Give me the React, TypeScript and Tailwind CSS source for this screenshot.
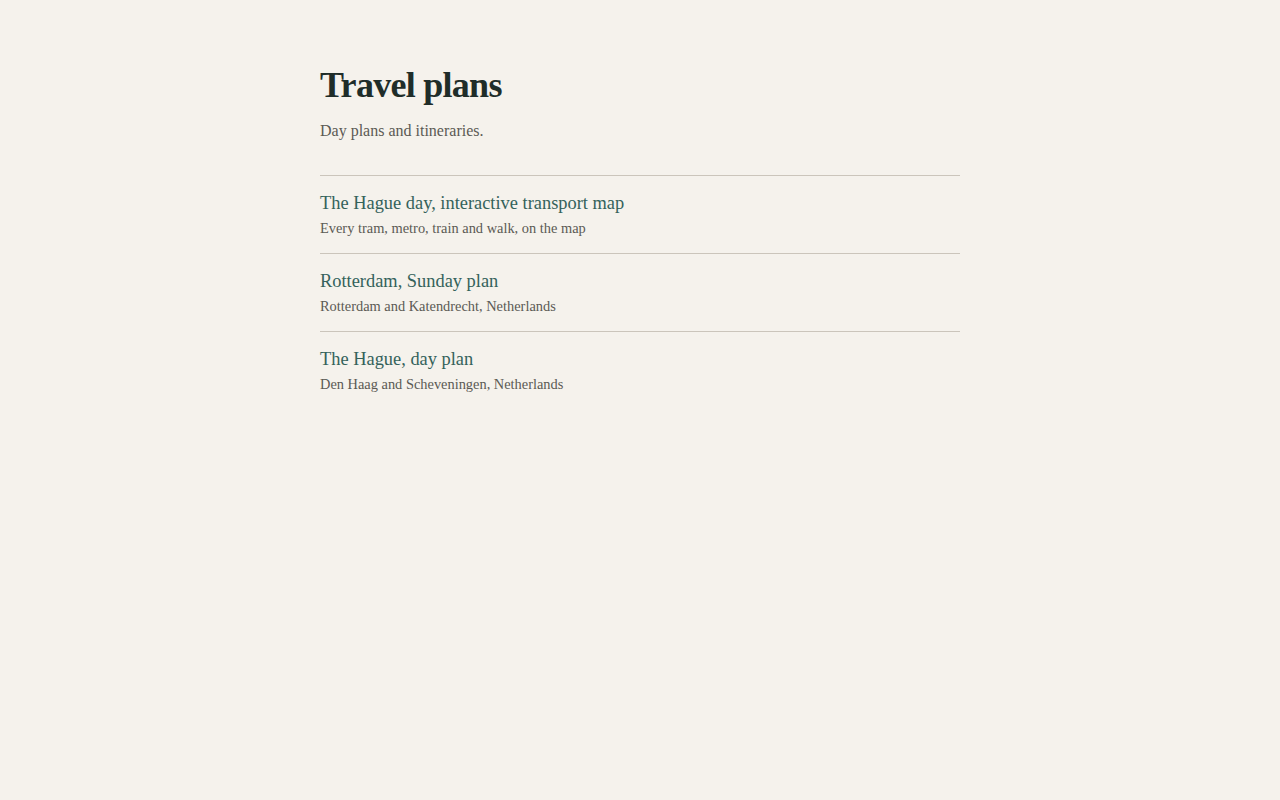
import React from 'react';

const plans = [
  { title: 'The Hague day, interactive transport map', sub: 'Every tram, metro, train and walk, on the map' },
  { title: 'Rotterdam, Sunday plan', sub: 'Rotterdam and Katendrecht, Netherlands' },
  { title: 'The Hague, day plan', sub: 'Den Haag and Scheveningen, Netherlands' },
];

export default function App() {
  return (
    <div className="min-h-screen bg-[#f5f2ec] font-['Liberation_Serif',serif]">
      <main className="mx-auto w-[640px] pt-16">
        <h1 className="text-[36px] font-bold leading-[1.2] tracking-[-0.02em] text-[#1f2d29]">Travel plans</h1>
        <p className="mt-3 text-base text-[#5b5a54]">Day plans and itineraries.</p>
        <ul className="mt-8">
          {plans.map((p) => (
            <li key={p.title} className="border-t border-[#cbc5bb] pt-[15px] pb-[15px]">
              <a href="#" className="block text-[18.4px] leading-[1.4] text-[#34625b]">{p.title}</a>
              <div className="mt-px text-[14.4px] leading-[1.4] text-[#5b5a54]">{p.sub}</div>
            </li>
          ))}
        </ul>
      </main>
    </div>
  );
}
